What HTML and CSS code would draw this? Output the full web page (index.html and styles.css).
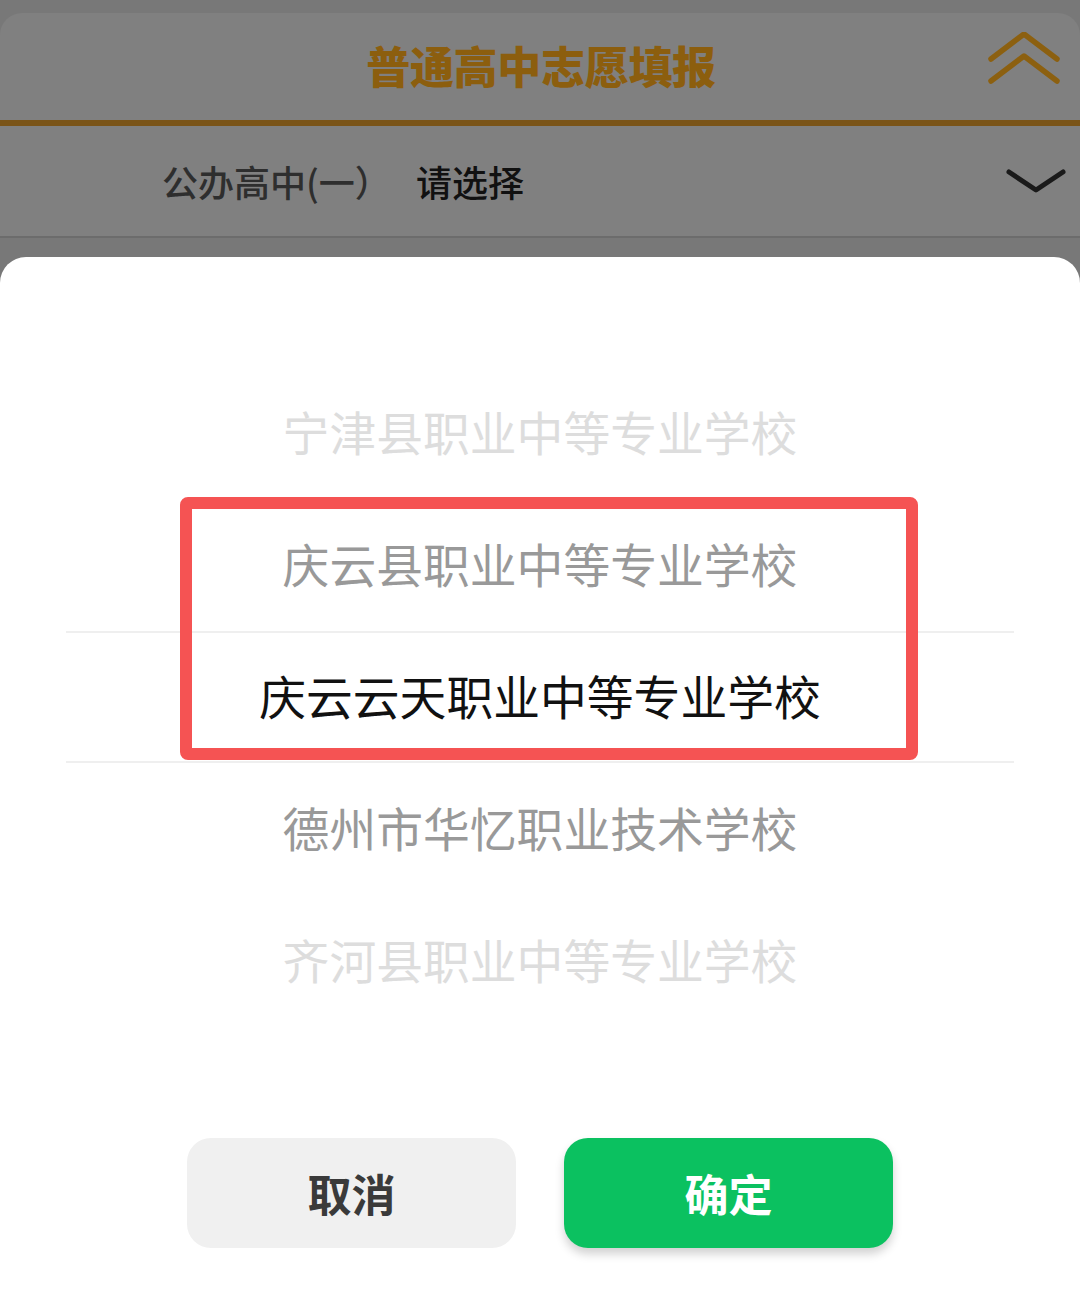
FILE: index.html
```html
<!DOCTYPE html>
<html lang="zh-CN">
<head>
<meta charset="utf-8">
<title>普通高中志愿填报</title>
<link rel="stylesheet" href="styles.css">
</head>
<body>
<div class="page">
  <div class="card">
    <div class="header">
      <span></span>
      <h1 class="title">普通高中志愿填报</h1>
      <svg class="up-icon" width="72" height="56" viewBox="0 0 72 56">
        <polyline points="3,27 36,2 69,27" fill="none" stroke="#8c6010" stroke-width="5.5" stroke-linecap="round" stroke-linejoin="round"/>
        <polyline points="3,49 36,24 69,49" fill="none" stroke="#8c6010" stroke-width="5.5" stroke-linecap="round" stroke-linejoin="round"/>
      </svg>
    </div>
    <div class="row">
      <span class="label">公办高中(一）</span>
      <span class="value">请选择</span>
      <svg class="down-icon" width="60" height="26" viewBox="0 0 60 26">
        <polyline points="3,3 30,21 57,3" fill="none" stroke="#1a1a1a" stroke-width="5" stroke-linecap="round" stroke-linejoin="round"/>
      </svg>
    </div>
  </div>
  <div class="sheet">
    <div class="picker">
      <div class="item far">宁津县职业中等专业学校</div>
      <div class="item near">庆云县职业中等专业学校</div>
      <div class="item selected">庆云云天职业中等专业学校</div>
      <div class="item near">德州市华忆职业技术学校</div>
      <div class="item far">齐河县职业中等专业学校</div>
    </div>
    <div class="actions">
      <button class="btn cancel">取消</button>
      <button class="btn confirm">确定</button>
    </div>
    <div class="highlight"></div>
  </div>
</div>
</body>
</html>
```
FILE: styles.css
```css
* { box-sizing: border-box; }
html, body { margin: 0; padding: 0; }
body {
  width: 1080px;
  height: 1304px;
  overflow: hidden;
  font-family: "Noto Sans CJK SC", "Noto Sans", sans-serif;
  background: #787878;
}
.page {
  width: 1080px;
  height: 1304px;
  padding-top: 13px;
  display: flex;
  flex-direction: column;
}
.card {
  background: #808080;
  border-radius: 22px 22px 0 0;
  margin-bottom: 19px;
}
.header {
  height: 113px;
  display: grid;
  grid-template-columns: 1fr auto 1fr;
  align-items: center;
  border-bottom: 6px solid #7a5418;
}
.title {
  margin: 0 0 0 2px;
  font-size: 44px;
  font-weight: 900;
  color: #8c5e0e;
  letter-spacing: -0.3px;
  line-height: 1;
  padding-bottom: 4px;
}
.up-icon {
  justify-self: end;
  margin-right: 20px;
  margin-top: -14px;
}
.row {
  height: 112px;
  display: flex;
  align-items: center;
  padding-left: 162px;
  padding-right: 14px;
  border-bottom: 2px solid #6c6c6c;
}
.label {
  width: 254px;
  font-size: 36px;
  font-weight: 500;
  color: #2e2e2e;
}
.value {
  font-size: 36px;
  font-weight: 500;
  color: #111;
  flex: 1;
}
.down-icon { margin-top: 2px; }
.sheet {
  position: relative;
  flex: 1;
  background: #fff;
  border-radius: 26px 26px 0 0;
  padding-top: 110px;
}
.picker {
  padding: 0 66px;
}
.item {
  height: 132px;
  display: flex;
  align-items: center;
  justify-content: center;
  font-size: 46.8px;
  line-height: 1;
  padding-bottom: 3px;
  color: #ddd;
}
.item.near { color: #999; }
.item.selected {
  color: #111;
  border-top: 2px solid #efefef;
  border-bottom: 2px solid #efefef;
}
.actions {
  display: flex;
  justify-content: center;
  gap: 48px;
  margin-top: 111px;
}
.btn {
  width: 329px;
  height: 110px;
  border: none;
  border-radius: 24px;
  font-family: "Noto Sans CJK SC", "Noto Sans", sans-serif;
  font-size: 44px;
  font-weight: 700;
}
.cancel {
  background: #f0f0f0;
  color: #3a3a3a;
}
.confirm {
  background: #0bc160;
  color: #fff;
  box-shadow: 0 6px 10px rgba(0,0,0,0.18);
}
.highlight {
  position: absolute;
  left: 180px;
  top: 240px;
  width: 738px;
  height: 263px;
  border: 12px solid #f55353;
  border-radius: 8px;
  pointer-events: none;
}
```
